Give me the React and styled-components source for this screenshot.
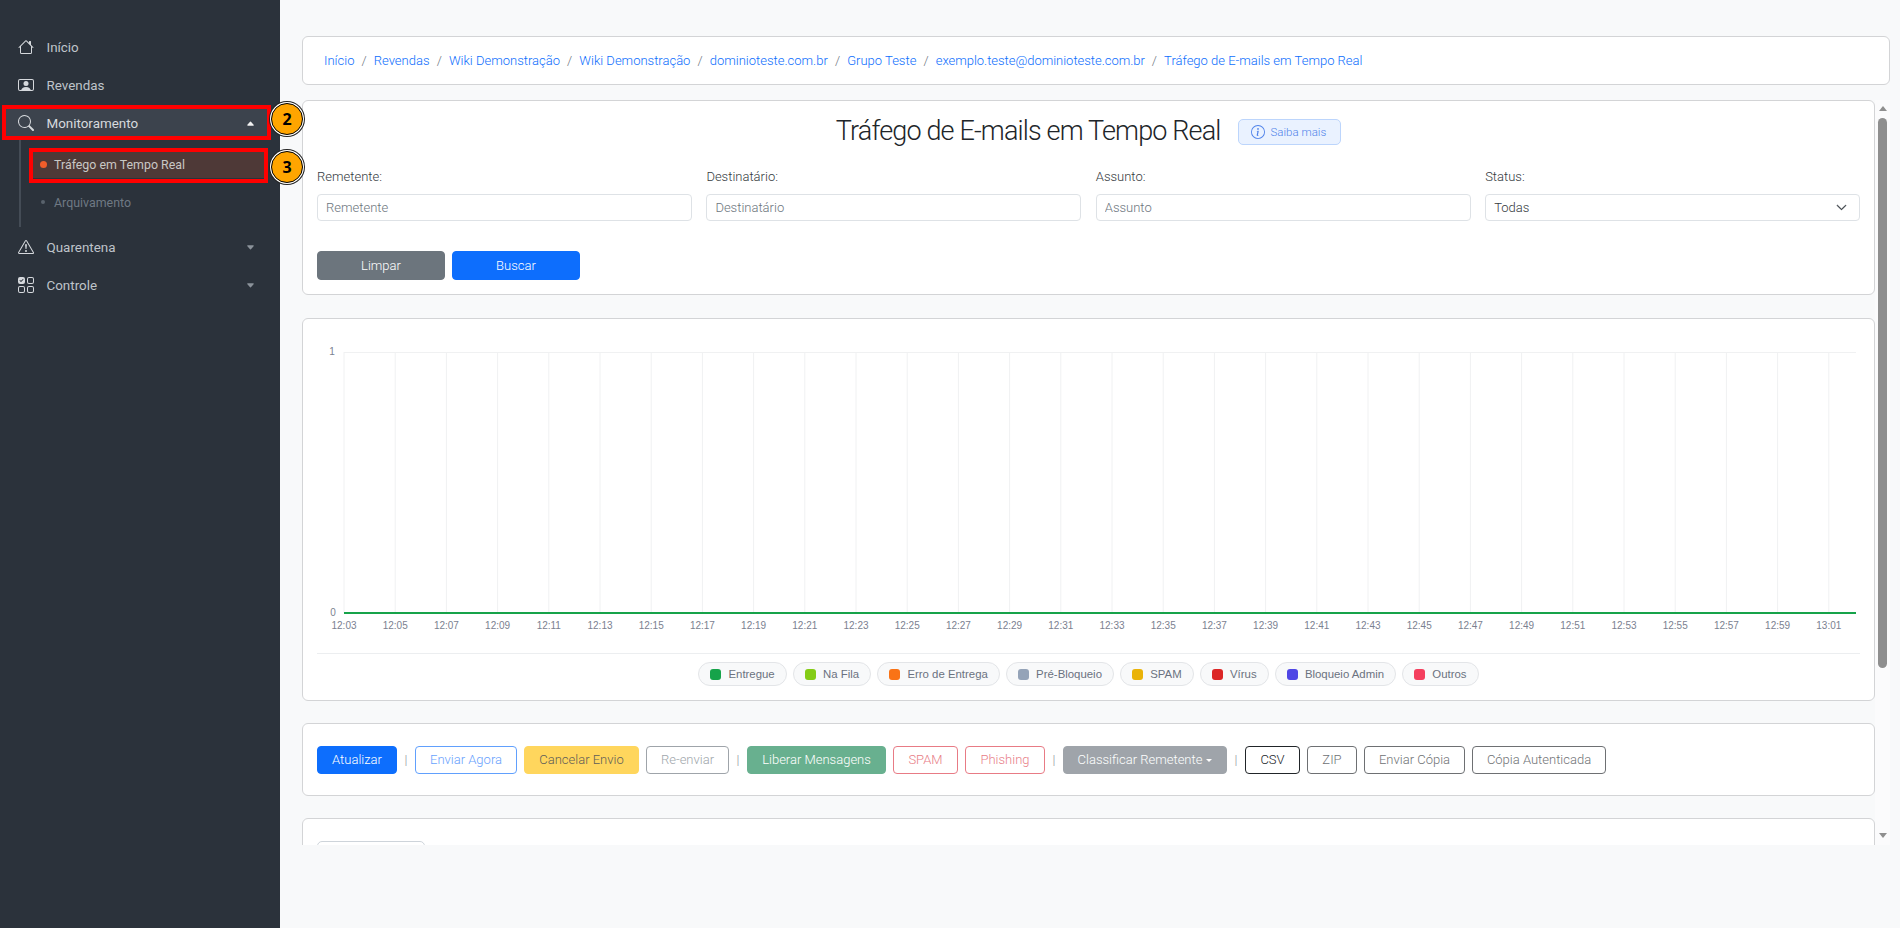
import styled, { createGlobalStyle } from 'styled-components';
import {
  BsHouse,
  BsPersonVideo,
  BsSearch,
  BsExclamationTriangle,
  BsUiChecksGrid,
  BsInfoCircle,
  BsChevronDown,
  BsCaretUpFill,
  BsCaretDownFill,
} from 'react-icons/bs';

const GlobalStyle = createGlobalStyle`
  html, body {
    margin: 0;
    padding: 0;
    height: 100%;
    overflow: hidden;
    background: #f8f9fa;
    font-family: Roboto, "Liberation Sans", sans-serif;
  }
  * {
    box-sizing: border-box;
  }
`;

const Page = styled.div`
  display: flex;
  height: 928px;
`;

const Sidebar = styled.aside`
  position: relative;
  z-index: 2;
  flex: 0 0 280px;
  padding-top: 28px;
  background: #2b323b;
`;

const NavRow = styled.div`
  position: relative;
  display: flex;
  align-items: center;
  height: 38px;
  padding: 0 25px 0 18px;
  color: #bfc4ca;
  font-size: 13.4px;
  svg.icon {
    flex: 0 0 16px;
    width: 16px;
    height: 16px;
    margin-right: 12.5px;
    color: #d5d8dc;
  }
`;

const NavActive = styled.div`
  position: absolute;
  top: 5px;
  left: 6px;
  right: 13px;
  height: 27px;
  background: #3c434d;
`;

const NavContent = styled.div`
  position: relative;
  display: flex;
  align-items: center;
  flex: 1;
  ${({ $active }) => $active && 'color: #d7dadd;'}
`;

const Caret = styled.span`
  margin-left: auto;
  display: flex;
  font-size: 9px;
  color: ${({ $open }) => ($open ? '#f2f2f2' : '#8b929a')};
`;

const SubMenu = styled.div`
  position: relative;
  padding: 3px 0 7px 0;
  &::before {
    content: '';
    position: absolute;
    left: 19px;
    top: -2px;
    bottom: 1px;
    width: 2px;
    background: #444c56;
  }
`;

const SubRow = styled.div`
  position: relative;
  display: flex;
  align-items: center;
  height: 38px;
  padding-left: 54px;
  font-size: 12.4px;
  color: ${({ $active }) => ($active ? '#c9c7c5' : '#6f7984')};
  ${({ $active }) =>
    $active &&
    `
    &::before {
      content: '';
      position: absolute;
      top: 6px;
      left: 33px;
      right: 14px;
      height: 27px;
      background: #4e3937;
    }
  `}
`;

const SubDot = styled.span`
  position: absolute;
  left: ${({ $active }) => ($active ? '40px' : '41px')};
  width: ${({ $active }) => ($active ? '7px' : '4px')};
  height: ${({ $active }) => ($active ? '7px' : '4px')};
  border-radius: 50%;
  background: ${({ $active }) => ($active ? '#f15d2a' : '#59626c')};
`;

const SubLabel = styled.span`
  position: relative;
`;

const RedBox = styled.div`
  position: absolute;
  top: ${({ $top }) => $top}px;
  left: ${({ $left }) => $left}px;
  width: ${({ $width }) => $width}px;
  height: 35px;
  border: 4px solid #ff0000;
  pointer-events: none;
`;

const StepBadge = styled.div`
  position: absolute;
  top: ${({ $top }) => $top}px;
  left: 271px;
  width: 32px;
  height: 32px;
  display: flex;
  align-items: center;
  justify-content: center;
  border-radius: 50%;
  background: #ffa500;
  border: 1.5px solid #000;
  box-shadow: 0 0 0 1px #fff, 0 0 0 2px #222;
  color: #000;
  font-family: "Open Sans", sans-serif;
  font-size: 16px;
  font-weight: 700;
`;

const Main = styled.main`
  flex: 1;
  min-width: 0;
  padding: 36px 10px 0 22px;
`;

const Card = styled.section`
  background: #fff;
  border: 1px solid #d3d4d6;
  border-radius: 6px;
`;

const Breadcrumb = styled(Card)`
  display: flex;
  align-items: center;
  height: 49px;
  padding: 0 21px;
  margin-bottom: 15px;
  font-size: 13px;
  font-weight: 300;
`;

const Crumb = styled.a`
  color: #0d6efd;
  text-decoration: none;
  letter-spacing: ${({ $spacing }) => $spacing || 0}px;
`;

const CrumbSep = styled.span`
  padding: 0 7.1px;
  color: #6c757d;
`;

const ScrollArea = styled.div`
  display: flex;
  height: 745px;
  overflow: hidden;
`;

const ScrollContent = styled.div`
  flex: 1;
  min-width: 0;
`;

const ScrollBar = styled.div`
  display: flex;
  flex-direction: column;
  align-items: center;
  flex: 0 0 15px;
  background: #fbfbfc;
`;

const ScrollArrow = styled.span`
  width: 0;
  height: 0;
  border-left: 4.5px solid transparent;
  border-right: 4.5px solid transparent;
  ${({ $down }) =>
    $down
      ? 'border-top: 5px solid #8f8f8f; margin-top: auto; margin-bottom: 7px;'
      : 'border-bottom: 5px solid #8f8f8f; margin-top: 6px;'}
`;

const ScrollThumb = styled.div`
  width: 9px;
  height: 550px;
  margin-top: 7px;
  border-radius: 5px;
  background: #8f8f8f;
`;

const FormCard = styled(Card)`
  padding: 14px;
  margin-bottom: 23px;
`;

const TitleRow = styled.div`
  display: flex;
  align-items: center;
  justify-content: center;
  gap: 17px;
  height: 33px;
`;

const Title = styled.h1`
  margin: 0;
  color: #212529;
  font-size: 27px;
  font-weight: 300;
  line-height: 33px;
  letter-spacing: -0.85px;
`;

const InfoBadge = styled.button`
  display: flex;
  align-items: center;
  gap: 6px;
  height: 26px;
  padding: 0 14px 0 12px;
  background: #eaf2ff;
  border: 1px solid #bcd5fc;
  border-radius: 5px;
  color: #4f82ea;
  font-family: inherit;
  font-size: 11.5px;
  font-weight: 300;
  svg {
    width: 14px;
    height: 14px;
  }
`;

const FieldGrid = styled.div`
  display: grid;
  grid-template-columns: repeat(4, 1fr);
  column-gap: 14.5px;
  margin-top: 21px;
`;

const Field = styled.div`
  display: flex;
  flex-direction: column;
`;

const FieldLabel = styled.label`
  margin-bottom: 9px;
  color: #343a40;
  font-size: 13px;
  font-weight: 300;
  line-height: 16px;
`;

const TextInput = styled.input`
  height: 27px;
  padding: 0 8px;
  border: 1px solid #dee2e6;
  border-radius: 4px;
  background: #fff;
  font-family: inherit;
  font-size: 13px;
  font-weight: 300;
  outline: none;
  &::placeholder {
    color: #6c757d;
    opacity: 1;
  }
`;

const SelectBox = styled.div`
  display: flex;
  align-items: center;
  justify-content: space-between;
  height: 27px;
  padding: 0 12px 0 8px;
  border: 1px solid #dee2e6;
  border-radius: 4px;
  color: #343a40;
  font-size: 13px;
  font-weight: 300;
  svg {
    width: 11px;
    height: 11px;
    stroke-width: 0.8;
  }
`;

const FormActions = styled.div`
  display: flex;
  gap: 7px;
  margin-top: 30px;
`;

const variants = {
  primary: 'background: #0d6efd; border-color: #0d6efd; color: #fff;',
  secondary: 'background: #6c757d; border-color: #6c757d; color: #fff;',
  warning: 'background: #ffc107; border-color: #ffc107; color: #000; opacity: .65;',
  success: 'background: #198754; border-color: #198754; color: #fff; opacity: .65;',
  muted: 'background: #6c757d; border-color: #6c757d; color: #fff; opacity: .65;',
  outlinePrimary: 'background: #fff; border-color: #0d6efd; color: #0d6efd; opacity: .65;',
  outlineSecondary: 'background: #fff; border-color: #6c757d; color: #6c757d; opacity: .65;',
  outlineDanger: 'background: #fff; border-color: #dc3545; color: #dc3545; opacity: .65;',
  outlineDark: 'background: #fff; border-color: #212529; color: #212529;',
  outlineDarkOff: 'background: #fff; border-color: #212529; color: #212529; opacity: .65;',
};

const Button = styled.button`
  flex: none;
  width: ${({ $width }) => $width}px;
  height: ${({ $height }) => $height || 28}px;
  padding: 0;
  border: 1px solid transparent;
  border-radius: 4px;
  font-family: inherit;
  font-size: 13px;
  font-weight: 300;
  ${({ $variant }) => variants[$variant]}
`;

const ChartCard = styled(Card)`
  padding: 13px 14px 14px;
  margin-bottom: 22px;
`;

const ChartSvg = styled.svg`
  display: block;
  width: 100%;
  height: 310px;
  margin-bottom: 11px;
  text {
    font-family: "Liberation Sans", Arial, sans-serif;
    font-size: 10px;
    fill: #7b8190;
  }
`;

const Legend = styled.div`
  display: flex;
  justify-content: center;
  gap: 6.3px;
  padding-top: 8px;
  border-top: 1px solid #eceef0;
`;

const LegendPill = styled.div`
  display: flex;
  align-items: center;
  gap: 7px;
  height: 24px;
  padding: 0 11px;
  background: #f8f9fa;
  border: 1px solid #e3e5e8;
  border-radius: 12px;
  color: #6b7280;
  font-family: "Liberation Sans", Arial, sans-serif;
  font-size: 11.4px;
`;

const LegendSwatch = styled.span`
  width: 11px;
  height: 11px;
  border-radius: 3px;
  background: ${({ $color }) => $color};
`;

const ActionsCard = styled(Card)`
  display: flex;
  align-items: center;
  gap: 7px;
  height: 73px;
  padding: 0 14px;
  margin-bottom: 22px;
`;

const ActionSep = styled.span`
  flex: 0 0 4px;
  color: #8d939a;
  font-size: 13px;
  font-weight: 300;
  text-align: center;
`;

const CaretDown = styled.span`
  display: inline-block;
  margin-left: 4px;
  vertical-align: 2px;
  border-top: 3.5px solid currentColor;
  border-left: 3.5px solid transparent;
  border-right: 3.5px solid transparent;
`;

const TableCard = styled(Card)`
  height: 243px;
  padding: 22px 14px;
`;

const PageSizeBox = styled.div`
  width: 108px;
  height: 30px;
  border: 1px solid #ced4da;
  border-radius: 5px;
`;

const crumbs = [
  { label: 'Início' },
  { label: 'Revendas' },
  { label: 'Wiki Demonstração' },
  { label: 'Wiki Demonstração' },
  { label: 'dominioteste.com.br' },
  { label: 'Grupo Teste' },
  { label: 'exemplo.teste@dominioteste.com.br', spacing: -0.03 },
  { label: 'Tráfego de E-mails em Tempo Real' },
];

const fields = [
  { label: 'Remetente:', placeholder: 'Remetente' },
  { label: 'Destinatário:', placeholder: 'Destinatário' },
  { label: 'Assunto:', placeholder: 'Assunto' },
];

const legend = [
  { label: 'Entregue', color: '#16a34a' },
  { label: 'Na Fila', color: '#84cc16' },
  { label: 'Erro de Entrega', color: '#f97316' },
  { label: 'Pré-Bloqueio', color: '#94a3b8' },
  { label: 'SPAM', color: '#eab308' },
  { label: 'Vírus', color: '#dc2626' },
  { label: 'Bloqueio Admin', color: '#4f46e5' },
  { label: 'Outros', color: '#f43f5e' },
];

const actions = [
  { label: 'Atualizar', variant: 'primary', width: 80 },
  { sep: true },
  { label: 'Enviar Agora', variant: 'outlinePrimary', width: 102 },
  { label: 'Cancelar Envio', variant: 'warning', width: 115 },
  { label: 'Re-enviar', variant: 'outlineSecondary', width: 83 },
  { sep: true },
  { label: 'Liberar Mensagens', variant: 'success', width: 139 },
  { label: 'SPAM', variant: 'outlineDanger', width: 65 },
  { label: 'Phishing', variant: 'outlineDanger', width: 80 },
  { sep: true },
  { label: 'Classificar Remetente', variant: 'muted', width: 164, caret: true },
  { sep: true },
  { label: 'CSV', variant: 'outlineDark', width: 55 },
  { label: 'ZIP', variant: 'outlineDarkOff', width: 50 },
  { label: 'Enviar Cópia', variant: 'outlineDarkOff', width: 101 },
  { label: 'Cópia Autenticada', variant: 'outlineDarkOff', width: 134 },
];

// eixo x: de 12:03 a 13:01, de 2 em 2 minutos
const ticks = Array.from({ length: 30 }, (_, i) => {
  const total = 12 * 60 + 3 + i * 2;
  const h = Math.floor(total / 60);
  const m = String(total % 60).padStart(2, '0');
  return { label: `${h}:${m}`, x: 27 + i * 51.2 };
});

function RealtimeChart() {
  const top = 20;
  const base = 281;
  const right = 1539;
  return (
    <ChartSvg viewBox="0 0 1543 310" preserveAspectRatio="none">
      <line x1="27" x2={right} y1={top + 0.5} y2={top + 0.5} stroke="#f0f1f2" />
      {ticks.map(t => (
        <line key={t.x} x1={t.x} x2={t.x} y1={top} y2={base} stroke="#f0f1f2" />
      ))}
      <line x1="27" x2={right} y1={base} y2={base} stroke="#16a34a" strokeWidth="2" />
      <text x="15" y={top + 3} textAnchor="middle">1</text>
      <text x="16" y={base + 3} textAnchor="middle">0</text>
      {ticks.map(t => (
        <text key={t.label} x={t.x} y={base + 16} textAnchor="middle">{t.label}</text>
      ))}
    </ChartSvg>
  );
}

export default function App() {
  return (
    <>
      <GlobalStyle />
      <Page>
        <Sidebar>
          <NavRow>
            <BsHouse className="icon" />
            <NavContent>Início</NavContent>
          </NavRow>
          <NavRow>
            <BsPersonVideo className="icon" />
            <NavContent>Revendas</NavContent>
          </NavRow>
          <NavRow>
            <NavActive />
            <NavContent $active>
              <BsSearch className="icon" />
              Monitoramento
              <Caret $open><BsCaretUpFill /></Caret>
            </NavContent>
            <RedBox $top={1} $left={2} $width={269} />
            <StepBadge $top={-1}>2</StepBadge>
          </NavRow>
          <SubMenu>
            <SubRow $active>
              <SubDot $active />
              <SubLabel>Tráfego em Tempo Real</SubLabel>
              <RedBox $top={3} $left={29} $width={239} />
              <StepBadge $top={6}>3</StepBadge>
            </SubRow>
            <SubRow>
              <SubDot />
              <SubLabel>Arquivamento</SubLabel>
            </SubRow>
          </SubMenu>
          <NavRow>
            <BsExclamationTriangle className="icon" />
            <NavContent>
              Quarentena
              <Caret><BsCaretDownFill /></Caret>
            </NavContent>
          </NavRow>
          <NavRow>
            <BsUiChecksGrid className="icon" />
            <NavContent>
              Controle
              <Caret><BsCaretDownFill /></Caret>
            </NavContent>
          </NavRow>
        </Sidebar>

        <Main>
          <Breadcrumb>
            {crumbs.map((c, i) => (
              <span key={i}>
                {i > 0 && <CrumbSep>/</CrumbSep>}
                <Crumb href="#" $spacing={c.spacing}>{c.label}</Crumb>
              </span>
            ))}
          </Breadcrumb>

          <ScrollArea>
            <ScrollContent>
              <FormCard>
                <TitleRow>
                  <Title>Tráfego de E-mails em Tempo Real</Title>
                  <InfoBadge><BsInfoCircle /> Saiba mais</InfoBadge>
                </TitleRow>
                <FieldGrid>
                  {fields.map(f => (
                    <Field key={f.label}>
                      <FieldLabel>{f.label}</FieldLabel>
                      <TextInput placeholder={f.placeholder} />
                    </Field>
                  ))}
                  <Field>
                    <FieldLabel>Status:</FieldLabel>
                    <SelectBox>Todas <BsChevronDown /></SelectBox>
                  </Field>
                </FieldGrid>
                <FormActions>
                  <Button $variant="secondary" $width={128} $height={29}>Limpar</Button>
                  <Button $variant="primary" $width={128} $height={29}>Buscar</Button>
                </FormActions>
              </FormCard>

              <ChartCard>
                <RealtimeChart />
                <Legend>
                  {legend.map(l => (
                    <LegendPill key={l.label}>
                      <LegendSwatch $color={l.color} />
                      {l.label}
                    </LegendPill>
                  ))}
                </Legend>
              </ChartCard>

              <ActionsCard>
                {actions.map((a, i) =>
                  a.sep ? (
                    <ActionSep key={i}>|</ActionSep>
                  ) : (
                    <Button key={i} $variant={a.variant} $width={a.width}>
                      {a.label}
                      {a.caret && <CaretDown />}
                    </Button>
                  ),
                )}
              </ActionsCard>

              <TableCard>
                <PageSizeBox />
              </TableCard>
            </ScrollContent>
            <ScrollBar>
              <ScrollArrow />
              <ScrollThumb />
              <ScrollArrow $down />
            </ScrollBar>
          </ScrollArea>
        </Main>
      </Page>
    </>
  );
}
